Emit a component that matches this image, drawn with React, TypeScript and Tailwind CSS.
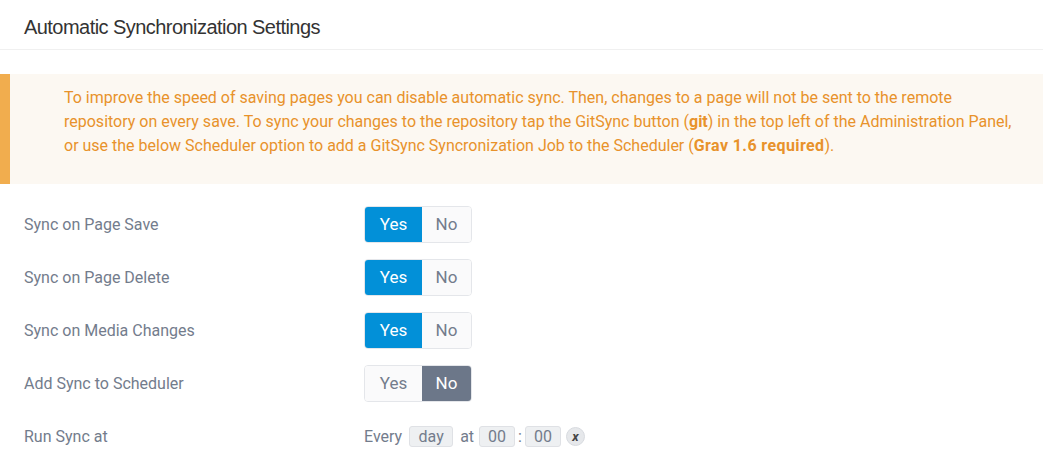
import React from "react";

function Toggle({ yes }: { yes: boolean }) {
  return (
    <div className="flex h-[37px] w-[108px] rounded-[4px] border border-[#e4e6ea] overflow-hidden text-[17px]">
      <div
        className={
          "flex items-center justify-center w-[57px] " +
          (yes ? "bg-[#0290d8] text-white" : "bg-[#fafafb] text-[#737c8c]")
        }
      >
        Yes
      </div>
      <div
        className={
          "flex items-center justify-center flex-1 " +
          (!yes ? "bg-[#6c7789] text-white" : "bg-[#fafafb] text-[#737c8c]")
        }
      >
        No
      </div>
    </div>
  );
}

function Row({ label, children }: { label: string; children: React.ReactNode }) {
  return (
    <div className="flex items-center h-[53px]">
      <div className="w-[364px] pl-6 text-[16px] text-[#737c8c]">{label}</div>
      <div>{children}</div>
    </div>
  );
}

function Box({ children, w }: { children: React.ReactNode; w: string }) {
  return (
    <span
      className={
        "inline-flex items-center justify-center h-[21px] rounded-[3px] border border-[#dfe1e5] bg-[#eef0f2] text-[#737c8c] " +
        w
      }
    >
      {children}
    </span>
  );
}

export default function App() {
  return (
    <div className="w-[1043px] h-[471px] bg-white overflow-hidden" style={{ fontFamily: "Roboto, 'Noto Sans', sans-serif" }}>
      <div className="h-[50px] border-b border-[#f0f0f0] pl-6 pt-[12px]">
        <h1
          className="text-[20px] text-[#333] tracking-[-0.55px]"
          style={{ fontFamily: "'Liberation Sans', Arial, sans-serif" }}
        >
          Automatic Synchronization Settings
        </h1>
      </div>
      <div className="mt-[24px] flex h-[110px] bg-[#fcf8f2]">
        <div className="w-[10px] bg-[#f1ad4e]" />
        <div className="pl-[54px] pr-2 pt-[12px] text-[16px] leading-[24px] text-[#e8922b] whitespace-nowrap">
          To improve the speed of saving pages you can disable automatic sync. Then, changes to a page will not be sent to the remote
          <br />
          repository on every save. To sync your changes to the repository tap the GitSync button (<b>git</b>) in the top left of the Administration Panel,
          <br />
          or use the below Scheduler option to add a GitSync Syncronization Job to the Scheduler (<b className="tracking-[0.4px]">Grav 1.6 required</b>).
        </div>
      </div>
      <div className="pt-[14px]">
        <Row label="Sync on Page Save">
          <Toggle yes />
        </Row>
        <Row label="Sync on Page Delete">
          <Toggle yes />
        </Row>
        <Row label="Sync on Media Changes">
          <Toggle yes />
        </Row>
        <Row label="Add Sync to Scheduler">
          <Toggle yes={false} />
        </Row>
        <Row label="Run Sync at">
          <div className="flex items-center text-[16px] text-[#737c8c]">
            <span>Every</span>
            <span className="ml-[7px]">
              <Box w="w-[44px]">day</Box>
            </span>
            <span className="ml-[7px]">at</span>
            <span className="ml-[5px]">
              <Box w="w-[36px]">00</Box>
            </span>
            <span className="mx-[3px]">:</span>
            <Box w="w-[36px]">00</Box>
            <span className="ml-[5px] inline-flex items-center justify-center w-[19px] h-[19px] rounded-full bg-[#e6e8eb] border border-[#d8dbe0] text-[#444] text-[13px] leading-none font-bold italic pb-[1px]">
              x
            </span>
          </div>
        </Row>
      </div>
    </div>
  );
}
